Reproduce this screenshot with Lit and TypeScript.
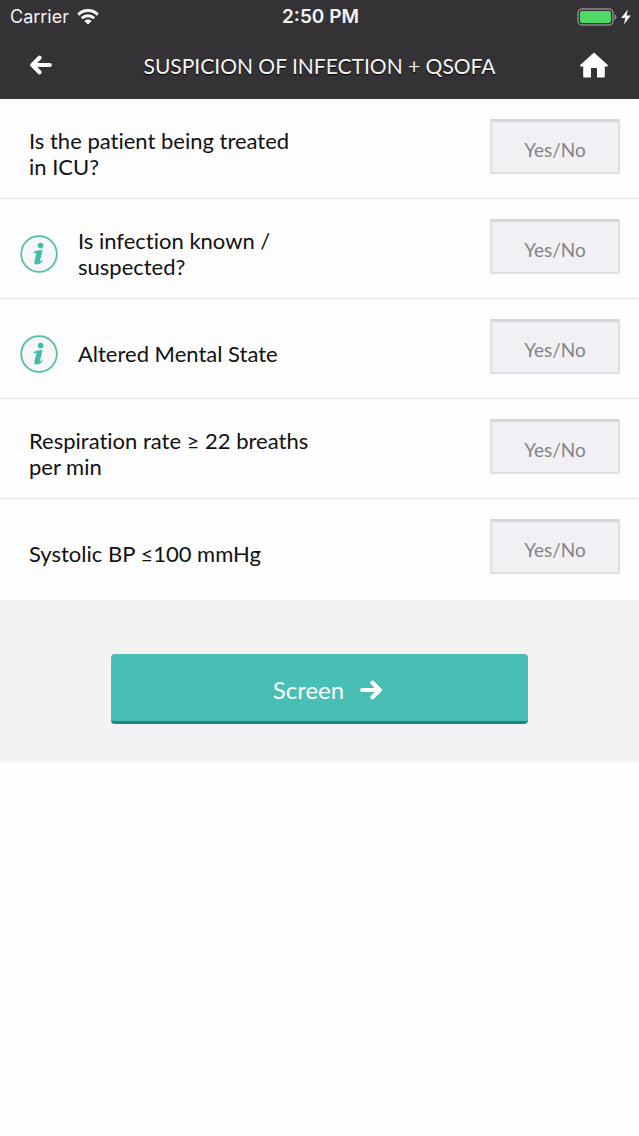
import { LitElement, html, css, svg, nothing } from "lit";
import { customElement, property } from "lit/decorators.js";

interface Question {
  id: string;
  text: string;
  info: boolean;
}

const QUESTIONS: Question[] = [
  { id: "icu", text: "Is the patient being treated in ICU?", info: false },
  { id: "infection", text: "Is infection known / suspected?", info: true },
  { id: "mental", text: "Altered Mental State", info: true },
  { id: "respiration", text: "Respiration rate ≥ 22 breaths per min", info: false },
  { id: "systolic", text: "Systolic BP ≤100 mmHg", info: false },
];

const arrowPath = svg`<path d="M2.200 10H19.500M12.500 2.700L19.700 10L12.500 17.300" fill="none"
  stroke="currentColor" stroke-width="4.200" stroke-linecap="round" stroke-linejoin="round" />`;

@customElement("status-bar")
export class StatusBar extends LitElement {
  static styles = css`
    :host {
      display: grid;
      grid-template-columns: 1fr auto 1fr;
      align-items: center;
      height: 33px;
      padding: 0 8px 0 10px;
      color: #f4f4f4;
      font: 18px/20px Inter, "Liberation Sans", sans-serif;
    }
    .carrier,
    .power {
      display: flex;
      align-items: center;
      gap: 8px;
    }
    .power {
      justify-content: flex-end;
      gap: 4px;
    }
    .time {
      font-size: 19px;
      font-weight: 600;
    }
    svg {
      display: block;
    }
  `;

  render() {
    return html`
      <div class="carrier">
        <span>Carrier</span>
        <svg width="22" height="16" viewBox="0 0 22 16" aria-hidden="true">
          <g fill="none" stroke="#fff" stroke-width="2.900">
            <path d="M1.200 5.600C6.800 0.200 15.200 0.200 20.800 5.600" />
            <path d="M4.800 9.300C8.400 5.900 13.600 5.900 17.200 9.300" />
          </g>
          <path d="M7.400 11.900C9.500 10 12.500 10 14.600 11.900L11 15.500Z" fill="#fff" />
        </svg>
      </div>
      <span class="time">2:50 PM</span>
      <div class="power">
        <svg width="40" height="18" viewBox="0 0 40 18" aria-hidden="true">
          <rect x="1" y="1" width="35" height="16" rx="4" fill="none" stroke="#8b8a8c" stroke-width="1.500" />
          <rect x="3" y="3" width="31" height="12" rx="2" fill="#4cd964" />
          <path d="M37.500 6C40 7 40 11 37.500 12Z" fill="#8b8a8c" />
        </svg>
        <svg width="10" height="16" viewBox="0 0 10 16" aria-hidden="true">
          <path d="M6.800 0.500L0.200 9H4.300L3 15.500L9.800 6.500H5.600Z" fill="#fff" />
        </svg>
      </div>
    `;
  }
}

@customElement("nav-bar")
export class NavBar extends LitElement {
  static styles = css`
    :host {
      display: grid;
      grid-template-columns: 82px 1fr 82px;
      align-items: center;
      height: 66px;
      color: #fff;
    }
    h1 {
      margin: 0;
      text-align: center;
      color: #f6f6f6;
      font: 400 21px/26px Lato, sans-serif;
      text-shadow: 0 1px 1px #000;
    }
    button {
      display: flex;
      justify-content: center;
      align-items: center;
      height: 48px;
      margin: 0;
      padding: 0 0 2px;
      border: 0;
      background: none;
      color: inherit;
    }
    .home {
      padding-right: 8px;
    }
  `;

  render() {
    return html`
      <button type="button" aria-label="Back">
        <svg width="22" height="20" viewBox="0 0 22 20" aria-hidden="true">
          <g transform="matrix(-1 0 0 1 22 0)">${arrowPath}</g>
        </svg>
      </button>
      <h1>SUSPICION OF INFECTION + QSOFA</h1>
      <button class="home" type="button" aria-label="Home">
        <svg width="28" height="26" viewBox="0 0 28 26" aria-hidden="true">
          <path
            d="M14 0.500L28 13.200Q28 14.500 27 14.500H24.800V24.500Q24.800 25.500 23.800 25.500H17V16H11V25.500H4.200Q3.200 25.500 3.200 24.500V14.500H1Q0 14.500 0 13.200Z"
            fill="currentColor"
          />
        </svg>
      </button>
    `;
  }
}

@customElement("question-row")
export class QuestionRow extends LitElement {
  @property({ attribute: false }) question!: Question;

  static styles = css`
    :host {
      display: grid;
      grid-template-columns: 50% 1fr;
      box-sizing: border-box;
      min-height: 100px;
      border-bottom: 1px solid #e5e5e7;
    }
    .prompt {
      display: flex;
      align-items: center;
      gap: 20px;
      padding: 10px 8px 0 29px;
    }
    .prompt.with-info {
      padding-left: 20px;
    }
    label {
      font: 22px/26px Lato, sans-serif;
      font-variant-ligatures: none;
      color: #111;
    }
    .info {
      flex: none;
      margin: 0;
      padding: 0;
      border: 0;
      background: none;
    }
    svg {
      display: block;
    }
    select {
      justify-self: end;
      align-self: start;
      appearance: none;
      box-sizing: border-box;
      width: 130px;
      height: 55px;
      margin: 20px 19px 0 0;
      padding: 6px 0 0;
      border: 2px solid #e0dfe2;
      border-top: 3px solid #d6d5d8;
      border-radius: 0;
      background: #f2f0f4;
      color: #858487;
      font: 19px/24px Lato, sans-serif;
      text-align: center;
      text-align-last: center;
    }
  `;

  render() {
    const { id, text, info } = this.question;
    return html`
      <div class="prompt ${info ? "with-info" : ""}">
        ${info
          ? html`<button class="info" type="button" aria-label="More information">
              <svg width="38" height="38" viewBox="0 0 38 38" aria-hidden="true">
                <circle cx="19" cy="19" r="17.800" fill="#f7f7fa" stroke="#55bfa6" stroke-width="1.800" />
                <circle cx="20.600" cy="10.600" r="2.800" fill="#45bda6" />
                <path
                  d="M13.400 17.300C15.800 15.700 18.800 15 22.600 15L20 25.700C19.800 26.800 20.600 26.500 22.300 24.900L22.900 25.700C20.800 28.500 18.500 29.600 16.400 29.500C14.500 29.400 14 28 14.400 26.400L16.400 18.600C16.600 17.500 15.300 17.700 13.800 18.400Z"
                  fill="#45bda6"
                />
              </svg>
            </button>`
          : nothing}
        <label for=${id}>${text}</label>
      </div>
      <select id=${id}>
        <option value="">Yes/No</option>
        <option>Yes</option>
        <option>No</option>
      </select>
    `;
  }
}

@customElement("app-root")
export class AppRoot extends LitElement {
  static styles = css`
    :host {
      display: block;
      min-height: 100vh;
      background: #fdfdfd;
    }
    header {
      background: #343234;
    }
    .questions {
      padding-bottom: 1px;
    }
    .questions question-row:last-child {
      border-bottom-color: transparent;
    }
    .actions {
      display: flex;
      justify-content: center;
      padding: 54px 111px 38px;
      background: #f2f1f3;
    }
    .screen {
      flex: 1;
      display: flex;
      justify-content: center;
      align-items: center;
      gap: 16px;
      height: 70px;
      margin: 0;
      padding: 4px 0 0 16px;
      border: 0;
      border-bottom: 3px solid #24847a;
      border-radius: 4px;
      background: #48beb4;
      color: #fff;
      font: 24px/28px Lato, sans-serif;
    }
  `;

  render() {
    return html`
      <header>
        <status-bar></status-bar>
        <nav-bar></nav-bar>
      </header>
      <main>
        <div class="questions">
          ${QUESTIONS.map((q) => html`<question-row .question=${q}></question-row>`)}
        </div>
        <div class="actions">
          <button class="screen" type="button">
            <span>Screen</span>
            <svg width="22" height="20" viewBox="0 0 22 20" aria-hidden="true">${arrowPath}</svg>
          </button>
        </div>
      </main>
    `;
  }
}
